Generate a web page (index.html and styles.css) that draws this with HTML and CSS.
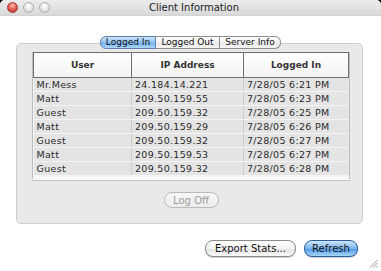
FILE: index.html
```html
<!DOCTYPE html>
<html lang="en">
  <head>
    <meta charset="UTF-8" />
    <title>Client Information</title>
    <link rel="stylesheet" href="styles.css">
  </head>
  <body>
    <div class="window">
      <div class="titlebar">
        <div class="lights">
          <span class="light close"></span>
          <span class="light"></span>
          <span class="light"></span>
        </div>
        <div class="title">Client Information</div>
      </div>

      <div class="tabs">
        <div class="tab active">Logged In</div>
        <div class="tab">Logged Out</div>
        <div class="tab">Server Info</div>
      </div>

      <div class="group">
        <div class="list">
          <table>
            <thead>
              <tr>
                <th class="c1">User</th>
                <th class="c2">IP Address</th>
                <th class="c3">Logged In</th>
              </tr>
            </thead>
            <tbody>
              <tr><td>Mr.Mess</td><td>24.184.14.221</td><td>7/28/05 6:21 PM</td></tr>
              <tr><td>Matt</td><td>209.50.159.55</td><td>7/28/05 6:23 PM</td></tr>
              <tr><td>Guest</td><td>209.50.159.32</td><td>7/28/05 6:25 PM</td></tr>
              <tr><td>Matt</td><td>209.50.159.29</td><td>7/28/05 6:26 PM</td></tr>
              <tr><td>Guest</td><td>209.50.159.32</td><td>7/28/05 6:27 PM</td></tr>
              <tr><td>Matt</td><td>209.50.159.53</td><td>7/28/05 6:27 PM</td></tr>
              <tr><td>Guest</td><td>209.50.159.32</td><td>7/28/05 6:28 PM</td></tr>
            </tbody>
          </table>
        </div>
        <div class="center">
          <button class="btn disabled">Log Off</button>
        </div>
      </div>

      <div class="footer">
        <button class="btn">Export Stats...</button>
        <button class="btn default">Refresh</button>
      </div>

      <svg class="grip" width="9" height="9" viewBox="0 0 9 9">
        <path d="M8.5 1 L1 8.5 M8.5 4 L4 8.5 M8.5 7 L7 8.5" stroke="#999" stroke-width="1" fill="none" />
      </svg>
    </div>
  </body>
</html>
```

FILE: styles.css
```css
* {
  margin: 0;
  padding: 0;
  box-sizing: border-box;
  font-family: "DejaVu Sans", sans-serif;
}
body {
  background-color: #000;
  width: 381px;
  height: 271px;
  overflow: hidden;
}
.window {
  position: relative;
  width: 381px;
  height: 271px;
  background-color: #fff;
  border-radius: 5px 5px 0 0;
  overflow: hidden;
}
.titlebar {
  height: 16px;
  display: flex;
  align-items: center;
  background-image: linear-gradient(#ececec, #d9d9d9);
  border-bottom: 1px solid #d3d3d3;
}
.lights {
  display: flex;
  gap: 5px;
  padding-left: 7px;
  width: 0;
}
.light {
  flex: none;
  width: 11px;
  height: 11px;
  border-radius: 50%;
  border: 1px solid #a9a9a9;
  background-image: radial-gradient(circle at 50% 30%, #ffffff, #e2e2e2 60%, #cfcfcf);
}
.light.close {
  border-color: #9a3a35;
  background-image: radial-gradient(circle at 50% 30%, #ffb9ae, #e0564a 55%, #b3302a);
}
.title {
  flex: 1;
  text-align: center;
  font-size: 10px;
  color: #222;
}
.tabs {
  position: relative;
  z-index: 1;
  display: flex;
  justify-content: center;
  margin-top: 20px;
  height: 13px;
}
.tab {
  height: 13px;
  line-height: 11px;
  font-size: 9px;
  color: #111;
  text-align: center;
  background-image: linear-gradient(#ffffff, #f1f1f1 50%, #e6e6e6 51%, #f6f6f6);
  border: 1px solid #8e8e8e;
  border-left: none;
}
.tab:first-child {
  width: 56px;
  border-left: 1px solid #5d7fae;
  border-radius: 6px 0 0 6px;
}
.tab:nth-child(2) {
  width: 64px;
}
.tab:last-child {
  width: 61px;
  border-radius: 0 6px 6px 0;
}
.tab.active {
  border-color: #5d7fae;
  background-image: linear-gradient(#cfe5fb, #8cc0f1 50%, #6aaaea 51%, #b0dafc);
}
.group {
  margin: -6px 18px 0 16px;
  height: 181px;
  background-color: #e9e9e9;
  border: 1px solid #cdcdcd;
  border-radius: 5px;
  padding: 8px 12px 0 15px;
}
.list {
  width: 318px;
  height: 128px;
  background-color: #f7f7f7;
  border: 1px solid #bdbdbd;
  border-top: none;
  border-bottom: 2px solid #f9f9f9;
  box-shadow: 0 1px 0 #c2c2c2;
}
table {
  width: 100%;
  border-collapse: collapse;
  table-layout: fixed;
}
th {
  height: 25px;
  font-size: 9px;
  font-weight: bold;
  color: #333;
  background-image: linear-gradient(#ffffff, #f3f3f3);
  border: 1px solid #6f6f6f;
}
th.c1 {
  width: 98px;
}
th.c2 {
  width: 112px;
}
td {
  height: 14px;
  font-size: 9.5px;
  line-height: 12px;
  letter-spacing: 0.3px;
  color: #2a2a2a;
  padding-left: 3px;
  background-color: #e4e4e4;
  border-bottom: 1px solid #f4f4f4;
  border-left: 1px solid #cacaca;
  white-space: nowrap;
}
td:first-child {
  border-left: none;
}
.center {
  display: flex;
  justify-content: center;
  margin-top: 12px;
}
.btn {
  height: 16px;
  font-size: 10px;
  color: #111;
  padding: 0 9px;
  border-radius: 8px;
  border: 1px solid #8b8b8b;
  background-image: linear-gradient(#ffffff, #f2f2f2 50%, #e2e2e2 51%, #fafafa);
  box-shadow: 0 1px 1px #d0d0d0;
}
.btn.disabled {
  width: 55px;
  padding: 0;
  color: #9c9c9c;
  border-color: #b9b9b9;
  background-image: linear-gradient(#f7f7f7, #ececec);
  box-shadow: none;
}
.footer {
  display: flex;
  justify-content: flex-end;
  gap: 8px;
  margin-top: 16px;
  padding-right: 23px;
}
.footer .btn {
  height: 17px;
  width: 91px;
  padding: 0;
}
.footer .btn.default {
  width: 54px;
  border-color: #2c5d9c;
  background-image: linear-gradient(#cde5fb, #7db6ef 50%, #4d97e6 51%, #a6d6fc);
}
.grip {
  position: absolute;
  right: 3px;
  bottom: 3px;
}
```
